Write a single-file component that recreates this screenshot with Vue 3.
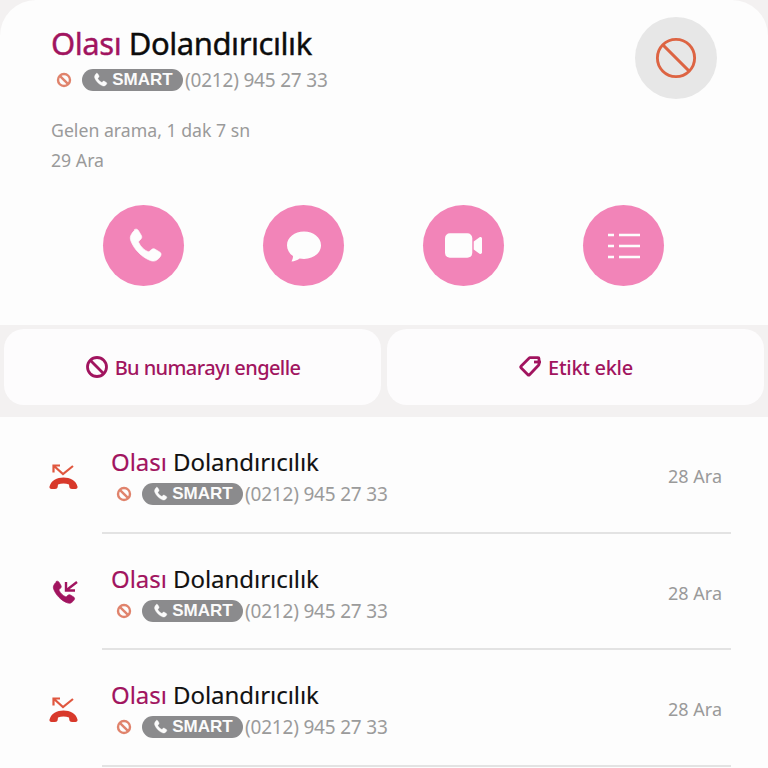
<script setup>
const calls = [
  { id: 1, type: 'missed', date: '28 Ara' },
  { id: 2, type: 'incoming', date: '28 Ara' },
  { id: 3, type: 'missed', date: '28 Ara' },
];

const phonePath = 'M6.200 2.200c.9-.6 2-.3 2.500.6l1.700 2.900c.4.8.3 1.600-.3 2.200L9 9c-.3.300-.3.600-.2.900.5 1.200 1.300 2.300 2.300 3.300 1 1 2.100 1.700 3.300 2.200.3.1.7.1.9-.2l1.100-1c.6-.6 1.500-.7 2.200-.3l2.800 1.700c.9.500 1.100 1.600.5 2.500-.6 1-1.500 1.900-2.500 2.500-1 .6-2.300.6-3.600.1-2.600-1-5-2.600-7-4.700-2.100-2-3.700-4.500-4.700-7.100-.5-1.300-.4-2.500.2-3.600.5-1 1-1.900 1.900-2.500z';
</script>

<template>
  <div class="screen">
    <section class="detail">
      <div class="detail-head">
        <div class="detail-info">
          <h1 class="title"><span class="accent">Olası</span> Dolandırıcılık</h1>
          <div class="number-line">
            <svg class="mini-block" viewBox="0 0 16 16">
              <circle cx="8" cy="8" r="6" />
              <path d="M3.800 3.800l8.400 8.400" />
            </svg>
            <span class="smart">
              <svg viewBox="0 0 24 24"><path :d="phonePath" /></svg>
              SMART
            </span>
            <span class="number">(0212) 945 27 33</span>
          </div>
          <p class="meta first">Gelen arama, 1 dak 7 sn</p>
          <p class="meta">29 Ara</p>
        </div>
        <div class="block-badge">
          <svg viewBox="0 0 44 44">
            <circle cx="22" cy="22" r="19.500" />
            <path d="M8.500 8.500l27 27" />
          </svg>
        </div>
      </div>

      <div class="actions">
        <button class="action">
          <svg class="ic-phone" viewBox="0 0 24 24"><path :d="phonePath" /></svg>
        </button>
        <button class="action">
          <svg class="ic-msg" viewBox="0 0 36 36">
            <path d="M18 3.500c9.400 0 17 5.900 17 13.700s-7.600 13.700-17 13.700c-1.500 0-3-.2-4.400-.5-2.300 1.700-5 2.700-8.100 3 1-1.500 1.500-3.300 1.500-5.300C3.300 25.500 1 21.600 1 17.200 1 9.400 8.600 3.500 18 3.500z" />
          </svg>
        </button>
        <button class="action">
          <svg class="ic-video" viewBox="0 0 38 25">
            <rect x="0" y="0" width="28" height="25" rx="5" />
            <path d="M29.500 8.500l6-4.500c1-.7 2.500 0 2.500 1.200v14.600c0 1.200-1.500 1.900-2.500 1.200l-6-4.500z" />
          </svg>
        </button>
        <button class="action">
          <svg class="ic-list" viewBox="0 0 32 26">
            <path d="M0 2h6M11 2h21M0 13h6M11 13h21M0 24h6M11 24h21" />
          </svg>
        </button>
      </div>
    </section>

    <section class="buttons">
      <button class="wide-btn tight">
        <svg class="btn-icon" viewBox="0 0 24 24">
          <circle cx="12" cy="12" r="9.500" />
          <path d="M5.300 5.300l13.400 13.400" />
        </svg>
        Bu numarayı engelle
      </button>
      <button class="wide-btn">
        <svg class="btn-icon tag" viewBox="0 0 24 24">
          <path d="M3 11.200l8-8c.3-.3.600-.5 1-.5h8c.6 0 1 .4 1 1v5.500c0 .4-.2.700-.5 1l-9 9.500c-.5.500-1.100.5-1.600 0l-6.900-7c-.5-.5-.5-1 0-1.500z" />
          <path d="M16 7h7" />
        </svg>
        Etikt ekle
      </button>
    </section>

    <section class="history">
      <div v-for="call in calls" :key="call.id" class="row">
        <div class="row-icon">
          <svg v-if="call.type === 'missed'" class="missed" viewBox="0 -2 30 28">
            <path class="arrow" d="M11 1.500H4.500v7M4.500 1.500l9.500 8.500L24 2" />
            <path class="handset" d="M.5 22.500C2 16.500 8 13.500 14.500 13.500s12.500 3 14 9c.3 1.500-.5 2.500-2 2.500H23c-1.500 0-2.500-.8-2.700-2.200l-.3-2.300c-3.500-1.200-7.500-1.200-11 0l-.3 2.300c-.2 1.400-1.200 2.200-2.700 2.200H2.500c-1.500 0-2.300-1-2-2.500z" />
          </svg>
          <svg v-else class="incoming" viewBox="0 0 32 28">
            <path class="handset" transform="scale(1.150)" :d="phonePath" />
            <path class="arrow" d="M28 3l-11 8.500M17 3v8.500h9" />
          </svg>
        </div>
        <div class="row-main">
          <div class="row-title"><span class="accent">Olası</span> Dolandırıcılık</div>
          <div class="number-line">
            <svg class="mini-block" viewBox="0 0 16 16">
              <circle cx="8" cy="8" r="6" />
              <path d="M3.800 3.800l8.400 8.400" />
            </svg>
            <span class="smart">
              <svg viewBox="0 0 24 24"><path :d="phonePath" /></svg>
              SMART
            </span>
            <span class="number">(0212) 945 27 33</span>
          </div>
        </div>
        <div class="row-date">{{ call.date }}</div>
      </div>
    </section>
  </div>
</template>

<style>
html,
body {
  margin: 0;
  background: #f3f1f1;
}
</style>

<style scoped>
.screen {
  width: 768px;
  height: 768px;
  overflow: hidden;
  background: #f3f1f1;
  font-family: "Noto Sans", "Open Sans", sans-serif;
}

.accent {
  color: #a1145f;
}

.detail {
  height: 325px;
  box-sizing: border-box;
  padding: 17px 51px 0;
  background: #fdfdfd;
  border-radius: 36px 36px 0 0;
}

.detail-head {
  display: flex;
  justify-content: space-between;
  align-items: flex-start;
}

.title {
  margin: 6px 0 0;
  font-size: 31px;
  line-height: 40px;
  font-weight: 400;
  letter-spacing: -0.45px;
  color: #0c0c0c;
  -webkit-text-stroke: 0.4px currentColor;
}

.number-line {
  display: flex;
  align-items: center;
  margin-top: 5px;
  height: 24px;
}

.row-main .number-line {
  margin-top: 3px;
}

.mini-block {
  width: 16px;
  height: 16px;
  margin: 0 10px 0 5px;
  fill: none;
  stroke: #e0836c;
  stroke-width: 2.400;
}

.smart {
  display: flex;
  align-items: center;
  justify-content: center;
  gap: 4px;
  width: 101px;
  height: 22px;
  box-sizing: border-box;
  border-radius: 11px;
  background: #8b8b8d;
  color: #fbfbfb;
  font-family: "Liberation Sans", sans-serif;
  font-size: 17px;
  font-weight: 700;
}

.smart svg {
  width: 16px;
  height: 16px;
  fill: #fbfbfb;
  stroke: #fbfbfb;
  stroke-width: 0.6;
}

.number {
  margin-left: 2px;
  font-size: 19px;
  color: #9b9b9b;
  letter-spacing: -0.2px;
}

.meta {
  margin: 0;
  font-size: 17.700px;
  line-height: 30px;
  color: #9a9a9a;
}

.meta.first {
  margin-top: 23px;
}

.block-badge {
  display: flex;
  align-items: center;
  justify-content: center;
  width: 82px;
  height: 82px;
  border-radius: 50%;
  background: #e7e7e7;
}

.block-badge svg {
  width: 42px;
  height: 42px;
  fill: none;
  stroke: #dd6443;
  stroke-width: 3;
}

.actions {
  display: flex;
  justify-content: center;
  gap: 79px;
  margin: 30px 0 0 -1px;
}

.action {
  display: flex;
  align-items: center;
  justify-content: center;
  width: 81px;
  height: 81px;
  padding: 0;
  border: none;
  border-radius: 50%;
  background: #f284b8;
}

.ic-phone {
  width: 40px;
  height: 40px;
  fill: #fdfdfd;
  stroke: #fdfdfd;
  stroke-width: 0.4;
}

.ic-msg {
  width: 36px;
  height: 36px;
  fill: #fdfdfd;
}

.ic-video {
  width: 37px;
  height: 25px;
  fill: #fdfdfd;
}

.ic-list {
  width: 32px;
  height: 26px;
  fill: none;
  stroke: #fdfdfd;
  stroke-width: 2.500;
}

.buttons {
  display: grid;
  grid-template-columns: 1fr 1fr;
  gap: 6px;
  height: 92px;
  box-sizing: border-box;
  padding: 4px 4px 12px;
}

.wide-btn {
  display: flex;
  align-items: center;
  justify-content: center;
  gap: 6px;
  border: none;
  border-radius: 20px;
  background: #fdfcfd;
  color: #a1145f;
  font-family: inherit;
  font-size: 20px;
  font-weight: 500;
  letter-spacing: -0.3px;
}

.wide-btn.tight {
  letter-spacing: -0.6px;
}

.btn-icon {
  width: 24px;
  height: 24px;
  fill: none;
  stroke: #a1145f;
  stroke-width: 2.800;
}

.history {
  background: #fdfdfd;
  height: 351px;
}

.row {
  display: flex;
  height: 116.500px;
  position: relative;
  box-sizing: border-box;
  padding: 28px 46px 0 111px;
}

.row::after {
  content: "";
  position: absolute;
  left: 102px;
  right: 37px;
  bottom: 0;
  height: 2px;
  background: #e3e3e3;
}

.row-icon {
  position: absolute;
  left: 49px;
  top: 45px;
}

.missed {
  display: block;
  width: 30px;
  height: 28px;
}

.missed .arrow {
  fill: none;
  stroke: #e0573f;
  stroke-width: 2.200;
}

.missed .handset {
  fill: #d8392b;
}

.incoming {
  display: block;
  width: 32px;
  height: 28px;
  fill: #a1145f;
}

.incoming .handset {
  stroke: #a1145f;
  stroke-width: 0.6;
}

.incoming .arrow {
  fill: none;
  stroke: #a1145f;
  stroke-width: 2.400;
}

.row-main {
  flex: 1;
}

.row-title {
  font-size: 24px;
  line-height: 34px;
  letter-spacing: -0.05px;
  color: #111;
  -webkit-text-stroke: 0.15px currentColor;
}

.row-date {
  margin-top: 19px;
  font-size: 18px;
  color: #9a9a9a;
}
</style>
